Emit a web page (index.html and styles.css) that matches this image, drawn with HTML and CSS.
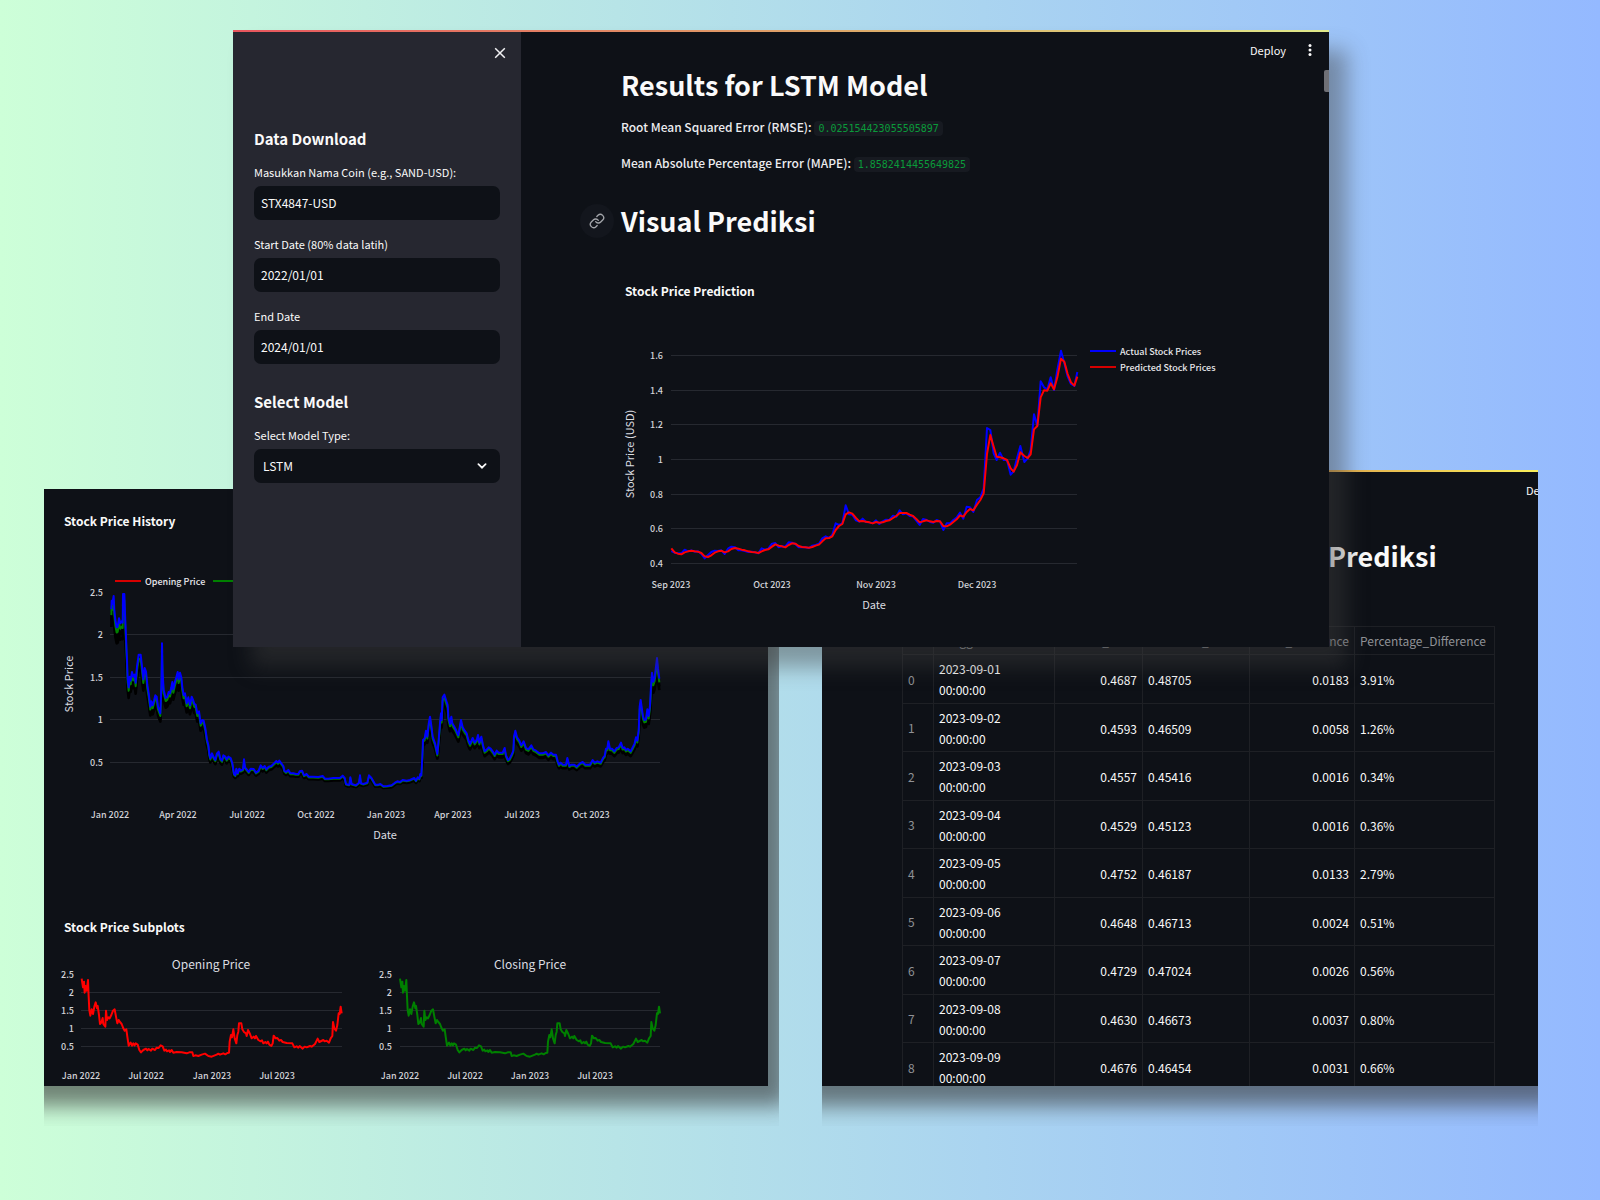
FILE: index.html
```html
<!DOCTYPE html>
<html lang="id">
<head>
<meta charset="utf-8">
<meta name="viewport" content="width=device-width, initial-scale=1">
<title>LSTM Stock Prediction</title>
<link rel="stylesheet" href="styles.css">
</head>
<body>
<main class="desktop">

  <div class="frame frame-history">
    <section class="window">
      <h2 class="chart-title">Stock Price History</h2>
      <svg class="chart" width="640" height="318" viewBox="44 533 640 318" role="img" aria-label="Stock price history">
        <g class="grid">
          <path d="M110 634.5H660M110 677.5H660M110 719.5H660M110 762.5H660"/>
        </g>
        <path d="M115 581H141" stroke="#d60000" stroke-width="2"/>
        <path d="M213 581H239" stroke="#008000" stroke-width="2"/>
        <text class="legend" x="145" y="585">Opening Price</text>
        <g class="tick end">
          <text x="103" y="596">2.5</text><text x="103" y="638">2</text><text x="103" y="681">1.5</text><text x="103" y="723">1</text><text x="103" y="766">0.5</text>
        </g>
        <g class="tick mid">
          <text x="110" y="818">Jan 2022</text><text x="178" y="818">Apr 2022</text><text x="247" y="818">Jul 2022</text><text x="316" y="818">Oct 2022</text><text x="386" y="818">Jan 2023</text><text x="453" y="818">Apr 2023</text><text x="522" y="818">Jul 2023</text><text x="591" y="818">Oct 2023</text>
        </g>
        <text class="axis" x="385" y="839">Date</text>
        <text class="axis" transform="translate(73 684) rotate(-90)">Stock Price</text>
        <svg x="40" y="480" width="640" height="400" viewBox="0 0 1920 1200">
          <defs>
            <g id="history">
              <polyline points="214,388 215,362 217,372 221,348 223,390 226,420 230,442 233,440 237,415 241,430 245,424 248,428 249,342 253,342 255,400 258,470 261,540 263,595 266,622 269,590 272,602 276,576 280,590 284,584 287,608 291,560 296,524 302,524 306,560 310,598 314,564 318,575 322,615 326,640 331,680 334,664 338,676 342,662 346,646 350,650 354,680 361,700 364,620 366,490 368,580 371,630 377,654 382,650 386,636 390,640 394,622 397,606 400,628 405,605 409,592 413,576 416,598 420,578 424,592 427,622 431,645 435,640 440,670 445,652 450,676 455,650 460,662 463,672 467,674 472,700 477,694 482,730 487,720 491,722 496,745 501,780 505,795 508,822 511,835 516,820 521,832 526,840 531,820 536,815 541,836 546,842 550,826 556,830 560,838 565,830 572,834 577,850 582,882 586,886 589,866 593,880 598,866 602,872 609,868 612,838 615,862 620,868 626,876 632,866 641,867 648,878 656,872 662,856 668,864 674,858 679,868 686,860 694,858 702,850 709,843 714,848 718,842 724,850 730,858 733,872 738,876 745,870 751,880 760,880 768,882 775,882 779,874 786,872 792,886 800,882 806,890 820,890 835,891 848,888 855,896 865,896 880,894 900,894 908,887 914,894 918,912 924,914 928,914 931,892 935,912 948,916 957,908 960,886 963,910 970,912 982,908 987,886 993,892 1000,904 1006,914 1015,914 1021,912 1030,919 1042,918 1055,916 1065,908 1072,904 1080,906 1088,900 1100,902 1110,900 1123,894 1128,902 1133,892 1138,896 1141,882 1144,886 1147,830 1149,780 1154,775 1158,752 1162,770 1166,732 1170,710 1173,730 1178,770 1185,790 1192,822 1196,780 1200,730 1203,700 1205,720 1208,652 1213,644 1218,660 1223,675 1225,710 1230,732 1234,710 1237,730 1243,740 1248,750 1255,766 1263,720 1268,742 1274,752 1280,760 1285,780 1290,792 1298,774 1304,788 1311,778 1314,765 1318,788 1324,770 1329,796 1334,814 1341,808 1346,802 1352,806 1358,814 1364,824 1370,812 1376,818 1388,818 1394,804 1398,826 1404,840 1409,836 1416,822 1420,812 1422,770 1426,752 1431,772 1438,782 1444,796 1451,784 1458,804 1465,808 1474,796 1480,808 1488,812 1498,820 1508,820 1518,816 1525,826 1533,818 1540,824 1548,824 1553,844 1557,854 1562,848 1568,854 1578,854 1582,834 1588,858 1594,854 1603,854 1610,860 1620,850 1628,846 1636,854 1650,854 1658,840 1664,848 1672,844 1682,848 1690,832 1694,828 1698,806 1702,806 1705,784 1710,806 1716,806 1723,814 1730,804 1736,802 1743,788 1748,804 1753,802 1758,810 1763,806 1772,814 1778,802 1784,790 1788,772 1792,782 1796,750 1799,680 1802,660 1805,682 1809,710 1813,720 1818,718 1822,688 1826,708 1830,676 1833,620 1836,578 1840,605 1844,592 1848,560 1851,534 1854,566 1858,596"/>
            </g>
          </defs>
          <use class="series" href="#history" stroke="#000000" stroke-width="8" transform="matrix(1 0 0 0.91 0 88)"/>
          <use class="series" href="#history" stroke="#000000" stroke-width="8" transform="matrix(1 0 0 0.94 0 59)"/>
          <use class="series" href="#history" stroke="#008000" stroke-width="6" transform="matrix(1 0 0 0.97 0 29)"/>
          <use class="series" href="#history" stroke="#0000ff" stroke-width="6"/>
        </svg>
      </svg>

      <h2 class="chart-title chart-title-next">Stock Price Subplots</h2>
      <svg class="chart" width="640" height="147" viewBox="44 939 640 147" role="img" aria-label="Opening and closing price">
        <g class="grid">
          <path d="M81 992.5H342M81 1010.5H342M81 1028.5H342M81 1046.5H342M400 992.5H660M400 1010.5H660M400 1028.5H660M400 1046.5H660"/>
        </g>
        <text class="subtitle" x="211" y="969">Opening Price</text>
        <text class="subtitle" x="530" y="969">Closing Price</text>
        <g class="tick end">
          <text x="74" y="978">2.5</text><text x="74" y="996">2</text><text x="74" y="1014">1.5</text><text x="74" y="1032">1</text><text x="74" y="1050">0.5</text>
          <text x="392" y="978">2.5</text><text x="392" y="996">2</text><text x="392" y="1014">1.5</text><text x="392" y="1032">1</text><text x="392" y="1050">0.5</text>
        </g>
        <g class="tick mid">
          <text x="81" y="1079">Jan 2022</text><text x="146" y="1079">Jul 2022</text><text x="212" y="1079">Jan 2023</text><text x="277" y="1079">Jul 2023</text>
          <text x="400" y="1079">Jan 2022</text><text x="465" y="1079">Jul 2022</text><text x="530" y="1079">Jan 2023</text><text x="595" y="1079">Jul 2023</text>
        </g>
        <svg x="40" y="900" width="640" height="240" viewBox="0 0 1920 720">
          <defs>
            <polyline id="price" points="125,236 129,262 132,245 134,278 137,258 140,272 144,240 146,290 148,330 151,347 155,328 159,342 163,320 167,307 171,325 173,318 177,345 180,372 184,368 188,354 190,372 196,380 198,332 201,360 205,352 209,355 214,345 219,332 224,328 228,350 232,370 236,360 240,366 245,372 250,385 254,392 259,388 262,410 266,437 272,428 276,437 280,430 284,436 287,430 293,434 298,450 303,457 310,450 318,446 322,451 326,447 333,452 337,446 345,450 350,443 356,444 362,436 368,439 373,452 378,449 381,454 387,451 390,456 395,450 400,458 410,456 425,457 440,460 448,457 457,457 460,468 466,466 475,468 485,464 495,461 505,468 515,470 530,464 535,461 540,464 550,460 556,463 562,459 567,458 569,425 573,405 576,412 580,388 584,415 589,430 592,405 595,395 597,370 604,370 607,388 612,396 618,400 620,408 624,390 630,402 635,415 641,410 645,415 648,408 655,420 662,424 666,421 670,430 676,426 680,430 684,425 688,434 694,438 698,430 701,407 707,415 712,414 718,422 723,420 728,426 740,429 757,430 763,442 770,439 775,443 779,438 788,446 794,440 800,442 810,438 815,440 825,432 833,416 838,426 850,420 854,424 860,422 867,428 872,415 877,408 879,366 883,385 888,392 892,375 896,340 899,342 902,320 905,340"/>
          </defs>
          <use class="series" href="#price" stroke="#ff0000" stroke-width="6"/>
          <use class="series" href="#price" stroke="#008000" stroke-width="6" x="955"/>
        </svg>
      </svg>
    </section>
  </div>

  <div class="frame frame-table">
    <section class="window window-accent accent-warm">
      <header class="toolbar toolbar-cut"><button type="button" class="deploy">Deploy</button></header>
      <h1 class="table-heading">Prediksi</h1>
      <table class="results">
        <colgroup><col class="c-index"><col class="c-date"><col class="c-actual"><col class="c-pred"><col class="c-diff"><col class="c-pct"></colgroup>
        <thead>
          <tr><th></th><th>Tanggal</th><th class="num">Actual_Price</th><th>Predicted_Price</th><th class="num">Price_Difference</th><th>Percentage_Difference</th></tr>
        </thead>
        <tbody>
          <tr><th scope="row">0</th><td>2023-09-01 00:00:00</td><td class="num">0.4687</td><td>0.48705</td><td class="num">0.0183</td><td>3.91%</td></tr>
          <tr><th scope="row">1</th><td>2023-09-02 00:00:00</td><td class="num">0.4593</td><td>0.46509</td><td class="num">0.0058</td><td>1.26%</td></tr>
          <tr><th scope="row">2</th><td>2023-09-03 00:00:00</td><td class="num">0.4557</td><td>0.45416</td><td class="num">0.0016</td><td>0.34%</td></tr>
          <tr><th scope="row">3</th><td>2023-09-04 00:00:00</td><td class="num">0.4529</td><td>0.45123</td><td class="num">0.0016</td><td>0.36%</td></tr>
          <tr><th scope="row">4</th><td>2023-09-05 00:00:00</td><td class="num">0.4752</td><td>0.46187</td><td class="num">0.0133</td><td>2.79%</td></tr>
          <tr><th scope="row">5</th><td>2023-09-06 00:00:00</td><td class="num">0.4648</td><td>0.46713</td><td class="num">0.0024</td><td>0.51%</td></tr>
          <tr><th scope="row">6</th><td>2023-09-07 00:00:00</td><td class="num">0.4729</td><td>0.47024</td><td class="num">0.0026</td><td>0.56%</td></tr>
          <tr><th scope="row">7</th><td>2023-09-08 00:00:00</td><td class="num">0.4630</td><td>0.46673</td><td class="num">0.0037</td><td>0.80%</td></tr>
          <tr><th scope="row">8</th><td>2023-09-09 00:00:00</td><td class="num">0.4676</td><td>0.46454</td><td class="num">0.0031</td><td>0.66%</td></tr>
        </tbody>
      </table>
    </section>
  </div>

  <section class="window window-accent app">
    <aside class="sidebar">
      <div class="sidebar-top">
        <button type="button" class="icon-button" aria-label="Close sidebar">
          <svg width="12" height="12" viewBox="0 0 12 12" fill="none" stroke="#f2f2f4" stroke-width="1.5"><path d="M1.2 1.2L10.8 10.8M10.8 1.2L1.2 10.8"/></svg>
        </button>
      </div>
      <h2 class="side-heading">Data Download</h2>
      <div class="field">
        <label for="coin">Masukkan Nama Coin (e.g., SAND-USD):</label>
        <input id="coin" type="text" value="STX4847-USD">
      </div>
      <div class="field">
        <label for="start">Start Date (80% data latih)</label>
        <input id="start" type="text" value="2022/01/01">
      </div>
      <div class="field">
        <label for="end">End Date</label>
        <input id="end" type="text" value="2024/01/01">
      </div>
      <h2 class="side-heading side-heading-next">Select Model</h2>
      <div class="field">
        <label for="model">Select Model Type:</label>
        <div class="select">
          <select id="model"><option>LSTM</option></select>
          <svg class="caret" width="10" height="6" viewBox="0 0 10 6" fill="none" stroke="#fafafa" stroke-width="1.7" stroke-linecap="round"><path d="M1.4 1.2L5 4.7L8.6 1.2"/></svg>
        </div>
      </div>
    </aside>

    <div class="content">
      <header class="toolbar">
        <button type="button" class="deploy">Deploy</button>
        <button type="button" class="icon-button" aria-label="Menu">
          <svg width="4" height="14" viewBox="0 0 4 14" fill="#fafafa"><circle cx="2" cy="2.4" r="1.5"/><circle cx="2" cy="7" r="1.5"/><circle cx="2" cy="11.6" r="1.5"/></svg>
        </button>
      </header>
      <div class="article">
        <h1>Results for LSTM Model</h1>
        <p>Root Mean Squared Error (RMSE): <code>0.025154423055505897</code></p>
        <p>Mean Absolute Percentage Error (MAPE): <code>1.8582414455649825</code></p>
        <div class="anchored">
          <a class="anchor" href="#visual-prediksi" aria-label="Link to heading">
            <svg width="16" height="16" viewBox="0 0 24 24" fill="none" stroke="#a3a5aa" stroke-width="2" stroke-linecap="round" stroke-linejoin="round"><path d="M10 13a5 5 0 0 0 7.54.54l3-3a5 5 0 0 0-7.07-7.07l-1.72 1.71"/><path d="M14 11a5 5 0 0 0-7.54-.54l-3 3a5 5 0 0 0 7.07 7.07l1.71-1.71"/></svg>
          </a>
          <h1 id="visual-prediksi">Visual Prediksi</h1>
        </div>
        <h2 class="chart-title chart-title-main">Stock Price Prediction</h2>
        <svg class="chart" width="620" height="344" viewBox="621 303 620 344" role="img" aria-label="Stock price prediction">
          <g class="grid">
            <path d="M671 355.5H1077M671 390.5H1077M671 424.5H1077M671 459.5H1077M671 494.5H1077M671 528.5H1077M671 563.5H1077"/>
          </g>
          <g class="tick end">
            <text x="663" y="359">1.6</text><text x="663" y="394">1.4</text><text x="663" y="428">1.2</text><text x="663" y="463">1</text><text x="663" y="498">0.8</text><text x="663" y="532">0.6</text><text x="663" y="567">0.4</text>
          </g>
          <g class="tick mid">
            <text x="671" y="588">Sep 2023</text><text x="772" y="588">Oct 2023</text><text x="876" y="588">Nov 2023</text><text x="977" y="588">Dec 2023</text>
          </g>
          <text class="axis" x="874" y="609">Date</text>
          <text class="axis" transform="translate(634 454) rotate(-90)">Stock Price (USD)</text>
          <path d="M1090 351H1116" stroke="#0000ff" stroke-width="2"/>
          <path d="M1090 367H1116" stroke="#d60000" stroke-width="2"/>
          <text class="legend" x="1120" y="355">Actual Stock Prices</text>
          <text class="legend" x="1120" y="371">Predicted Stock Prices</text>
          <svg x="610" y="330" width="500" height="300" viewBox="0 0 1500 900">
            <polyline class="series" stroke="#0000ff" stroke-width="6" points="184,663 194,668 204,670 214,670 224,659 234,664 244,661 254,665 264,664 274,672 284,685 294,675 304,666 314,662 324,663 334,661 344,672 354,656 364,650 375,652 385,661 395,661 405,663 415,666 425,665 435,667 445,670 455,655 465,659 475,656 486,641 496,639 506,652 516,649 526,650 536,637 546,638 556,642 566,652 576,651 586,652 597,654 607,647 617,645 627,641 637,625 647,619 657,624 667,614 677,580 687,585 697,580 707,526 717,553 727,554 738,571 748,575 758,566 768,576 778,577 788,580 798,571 808,582 818,574 828,569 838,570 849,557 859,560 869,541 879,553 889,550 899,558 909,559 919,572 929,585 939,567 950,570 960,576 970,578 980,570 990,574 1000,600 1010,580 1020,580 1030,570 1040,563 1050,548 1060,566 1070,530 1080,532 1090,546 1101,510 1111,502 1121,475 1131,294 1141,300 1151,370 1160,390 1170,368 1181,390 1191,390 1202,434 1211,424 1221,385 1231,348 1243,396 1253,385 1262,360 1272,253 1282,288 1292,154 1302,172 1312,178 1322,142 1332,180 1342,120 1353,62 1363,100 1373,140 1383,162 1393,168 1402,126"/>
            <polyline class="series" stroke="#ff0000" stroke-width="6" points="184,655 194,667 204,671 214,673 224,667 234,664 244,662 254,664 264,665 274,669 284,679 294,681 304,676 314,668 324,664 334,662 344,667 354,664 364,657 375,654 385,656 395,659 405,661 415,664 425,666 435,667 445,669 455,664 465,660 475,658 486,650 496,643 506,647 516,649 526,652 536,645 546,640 556,641 566,648 576,651 586,652 597,653 607,651 617,647 627,644 637,634 647,625 657,624 667,619 677,600 687,588 697,582 707,553 717,547 727,551 738,564 748,574 758,573 768,575 778,577 788,580 798,576 808,578 818,577 828,573 838,571 849,564 859,558 869,549 879,549 889,549 899,554 909,558 919,567 929,577 939,574 950,571 960,574 970,576 980,573 990,574 1000,588 1010,589 1020,584 1030,576 1040,568 1050,556 1060,560 1070,546 1080,537 1090,541 1101,524 1111,510 1121,490 1131,372 1141,315 1151,350 1160,380 1170,382 1181,385 1191,390 1202,415 1211,425 1221,405 1231,367 1243,378 1253,384 1262,373 1272,298 1282,288 1292,202 1302,181 1312,182 1322,160 1332,178 1342,142 1353,86 1363,95 1373,132 1383,157 1393,167 1402,140"/>
          </svg>
        </svg>
      </div>
      <span class="scroll-thumb"></span>
    </div>
  </section>

</main>
</body>
</html>
```

FILE: styles.css
```css
* { box-sizing: border-box; }

body {
  margin: 0;
  color: #fafafa;
  font-family: "Noto Sans CJK SC", "Noto Sans", sans-serif;
  font-size: 12px;
  line-height: 24px;
  background: linear-gradient(90deg, #cdffd8, #94b9ff);
}

h1, h2, p { margin: 0; }

h1 { font-size: 27px; font-weight: 700; line-height: 36px; }

button {
  padding: 0;
  border: 0;
  background: none;
  color: inherit;
  font: inherit;
}

/* Free canvas that carries the three overlapping windows */
.desktop {
  position: relative;
  min-height: 100vh;
  overflow: hidden;
}

.window { background: #0e1117; }

.window-accent {
  border-top: 2px solid transparent;
  background:
    linear-gradient(#0e1117, #0e1117) padding-box,
    linear-gradient(90deg, #e8555d, #dcae6a 60%, #dfe98a) border-box;
}

.accent-warm {
  background:
    linear-gradient(#0e1117, #0e1117) padding-box,
    linear-gradient(90deg, #e8555d, #e0a84f 70%, #fbf05a) border-box;
}

/* The frames crop the windows behind, shadows included */
.frame {
  position: absolute;
  overflow: hidden;
  padding-bottom: 40px;
}

.frame .window {
  overflow: hidden;
  box-shadow: 0 0 20px 20px rgba(50, 50, 50, 0.6);
}

.frame-history { top: 489px; left: 44px; right: 821px; padding-right: 11px; }
.frame-history .window { padding-top: 20px; }

.frame-table { top: 470px; left: 822px; right: 62px; }
.frame-table .window { height: 616px; }

/* Charts */
.chart { display: block; overflow: hidden; }
.chart-title { padding-left: 20px; font-size: 12px; font-weight: 700; line-height: 24px; }
.chart-title-next { margin-top: 64px; }
.chart-title-main { margin-top: 40px; padding-left: 4px; }
.grid { stroke: #262930; stroke-width: 1; fill: none; }
.series { fill: none; stroke-linejoin: round; stroke-linecap: butt; }
.tick, .legend { font-size: 9px; font-weight: 500; fill: #d2d3d8; }
.legend { fill: #e6e6ea; }
.axis { font-size: 11px; fill: #dcdde1; text-anchor: middle; }
.subtitle { font-size: 12px; fill: #dcdde1; text-anchor: middle; }
.end { text-anchor: end; }
.mid { text-anchor: middle; }

/* Prediction table */
.table-heading { margin: 31px 0 52px; padding-left: 506px; }

.results {
  width: 593px;
  margin-left: 80px;
  border-collapse: collapse;
  table-layout: fixed;
  font-size: 12px;
  line-height: 21px;
}

.results th, .results td {
  padding: 3px 5px;
  border: 1px solid #1e2025;
  text-align: left;
  font-weight: 400;
}

.results tbody tr:nth-child(even) td { padding-bottom: 2px; }
.results th { color: #909196; white-space: nowrap; }
.results .num { text-align: right; }
.c-index { width: 31px; }
.c-date { width: 121px; }
.c-actual { width: 88px; }
.c-pred { width: 107px; }
.c-diff { width: 105px; }
.c-pct { width: 140px; }
.results td:nth-child(2) { padding-right: 40px; }

/* Front window */
.app {
  position: absolute;
  top: 30px;
  left: 233px;
  right: 271px;
  display: grid;
  grid-template-columns: 288px minmax(0, 1fr);
  box-shadow: 18px 20px 20px rgba(64, 64, 64, 0.44);
}

.sidebar { padding: 0 21px; background: #262730; }
.sidebar-top { display: flex; justify-content: flex-end; height: 95px; padding-top: 15px; margin-right: -6px; }
.sidebar-top .icon-button { height: 12px; }
.icon-button { display: flex; }
.side-heading { margin-bottom: 11px; font-size: 15px; font-weight: 700; line-height: 24px; }
.side-heading-next { margin-top: 26px; }
.field { display: flex; flex-direction: column; gap: 4px; }
.field + .field { margin-top: 14px; }
.field label { font-size: 11px; line-height: 20px; }

.field input, .field select {
  width: 100%;
  height: 34px;
  padding: 0 7px 1px;
  border: 0;
  border-radius: 7px;
  background: #0e1117;
  color: #fafafa;
  font: 12px/20px "Noto Sans CJK SC", "Noto Sans", sans-serif;
}

.field select { padding: 0 9px 1px; appearance: none; }
.select { position: relative; }
.caret { position: absolute; top: 14px; right: 13px; }

.content { position: relative; }
.toolbar { display: flex; align-items: center; justify-content: flex-end; gap: 22px; height: 35px; padding-right: 17px; }
.toolbar-cut { justify-content: flex-start; padding: 0 0 0 704px; }
.deploy { font-size: 11px; line-height: 20px; }
.article { padding-left: 100px; }
.article p { margin-top: 12px; font-weight: 500; color: #ececef; }
.article code {
  padding: 2px 4px;
  border-radius: 4px;
  background: #171a21;
  color: #0a9a3a;
  font-family: "DejaVu Sans Mono", monospace;
  font-size: 10px;
  font-weight: 400;
  line-height: 12px;
}

.anchored { display: flex; align-items: center; gap: 7px; margin: 28px 0 0 -41px; }
.anchor {
  display: flex;
  align-items: center;
  justify-content: center;
  width: 34px;
  height: 34px;
  border-radius: 50%;
  background: #13161d;
}

.scroll-thumb {
  position: absolute;
  top: 38px;
  right: 0;
  width: 5px;
  height: 22px;
  border-radius: 2px 0 0 2px;
  background: #6f7076;
}
```
